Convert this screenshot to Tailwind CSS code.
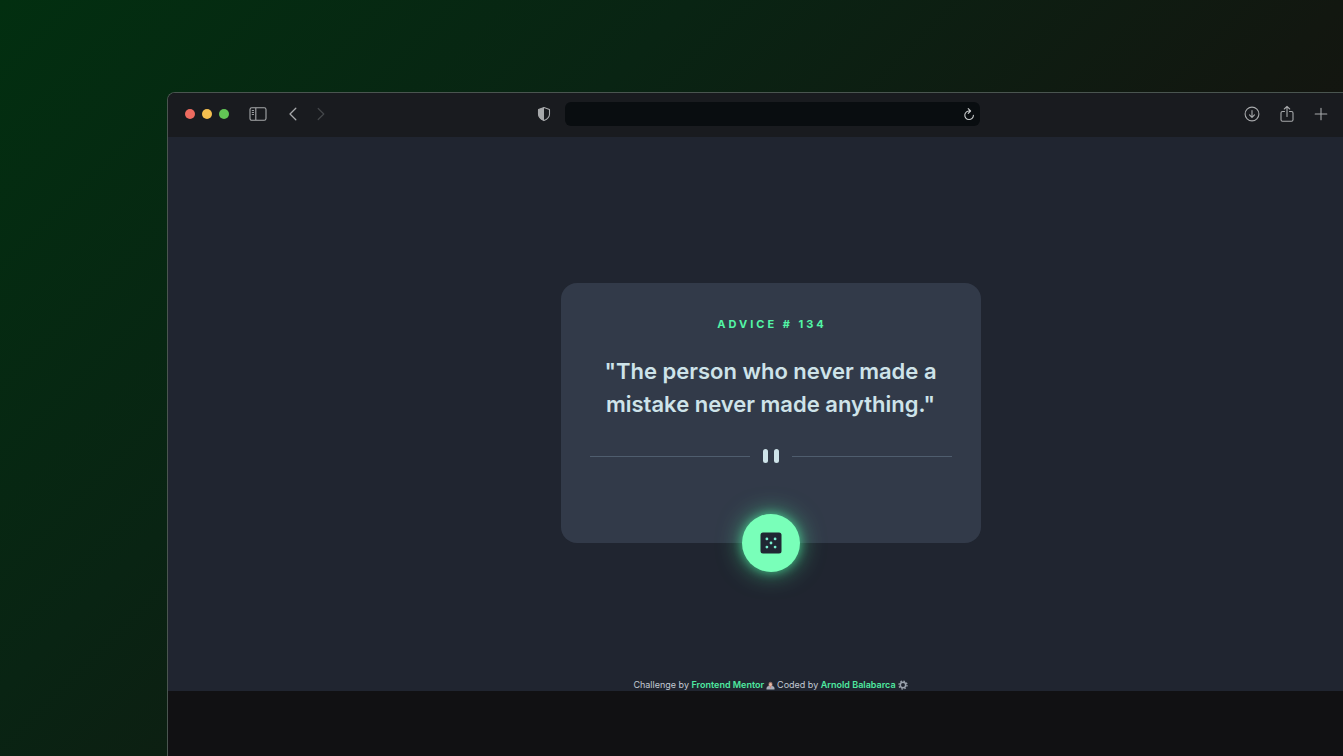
<!DOCTYPE html>
<html lang="en">
<head>
<meta charset="utf-8">
<meta name="viewport" content="width=device-width, initial-scale=1">
<title>Advice Generator</title>
<script src="https://cdn.jsdelivr.net/npm/@tailwindcss/browser@4"></script>
</head>
<body class="flex h-screen min-h-[700px] flex-col overflow-hidden bg-[linear-gradient(135deg,#022f10_0%,#092413_33%,#121710_64%,#1b0c0f_100%)] font-[Inter,sans-serif]">
  <div class="mt-[92px] -mr-[30px] ml-[167px] flex flex-1 flex-col overflow-hidden rounded-tl-lg border-t border-l border-[#4a5550] bg-[#111113]">
    <header class="flex h-11 shrink-0 items-center bg-[#191b1f] pb-[2px] text-[#a7a9ab]">
      <div class="flex flex-1 items-center pl-[17px]">
        <div class="flex gap-[7px]">
          <button aria-label="Close" class="size-[10px] rounded-full bg-[#ed6b60]"></button>
          <button aria-label="Minimize" class="size-[10px] rounded-full bg-[#f5bf4f]"></button>
          <button aria-label="Zoom" class="size-[10px] rounded-full bg-[#62c555]"></button>
        </div>
        <button aria-label="Sidebar" class="ml-5">
          <svg class="h-[14px] w-[18px]" viewBox="0 0 18 14" fill="none" stroke="currentColor"><rect x="1" y=".7" width="16" height="12.6" rx="1.8" stroke-width="1.1"/><path d="M6.8 1v12" stroke-width="1.1"/><path d="M2.8 3.5h2.2M2.8 5.5h2.2M2.8 7.5h2.2" stroke-width=".9"/></svg>
        </button>
        <button aria-label="Back" class="ml-[22px]">
          <svg class="h-[14px] w-2" viewBox="0 0 8 14" fill="none" stroke="currentColor" stroke-width="1.3" stroke-linecap="round" stroke-linejoin="round"><path d="M6.8 1.2 1 7l5.8 5.8"/></svg>
        </button>
        <button aria-label="Forward" class="ml-5 text-[#44474a]">
          <svg class="h-[14px] w-2" viewBox="0 0 8 14" fill="none" stroke="currentColor" stroke-width="1.2" stroke-linecap="round" stroke-linejoin="round"><path d="M1.2 1.5 6.8 7l-5.600 5.500"/></svg>
        </button>
      </div>
      <div class="flex items-center gap-[14px] pl-1">
        <button aria-label="Privacy report">
          <svg class="h-4 w-[14px]" viewBox="0 0 14 16"><path d="M7 1.500 12.500 3.400v5c0 2.900-2.700 4.800-5.500 6.200C4.200 13.200 1.500 11.300 1.500 8.400v-5z" fill="none" stroke="currentColor" stroke-width="1.1" stroke-linejoin="round"/><path d="M7 1.500 1.500 3.400v5c0 2.900 2.700 4.800 5.500 6.200z" fill="currentColor"/></svg>
        </button>
        <div class="flex h-6 w-[415px] items-center rounded-md bg-[#090d10] pr-1">
          <input type="text" aria-label="Address" class="h-full min-w-0 flex-1 rounded-md bg-transparent px-3 text-xs outline-none">
          <button aria-label="Reload" class="text-[#c9cbcc]">
            <svg class="size-[14px]" viewBox="0 0 14 14" fill="none" stroke="currentColor" stroke-width="1.1" stroke-linecap="round" stroke-linejoin="round"><path d="M7.800 4A4.300 4.300 0 1 0 11.400 8.200M6.200 1.700 8.600 4 6.200 6.300"/></svg>
          </button>
        </div>
      </div>
      <div class="flex flex-1 items-center justify-end gap-5 pr-[45px]">
        <button aria-label="Downloads">
          <svg class="size-4" viewBox="0 0 16 16" fill="none" stroke="currentColor" stroke-width="1.1" stroke-linecap="round" stroke-linejoin="round"><circle cx="8" cy="8" r="6.900"/><path d="M8 4.500v6.700M5.500 8.800 8 11.300l2.500-2.500"/></svg>
        </button>
        <button aria-label="Share">
          <svg class="h-[18px] w-[14px]" viewBox="0 0 14 18" fill="none" stroke="currentColor" stroke-width="1.1" stroke-linecap="round" stroke-linejoin="round"><path d="M4.500 6.500H2.500Q1 6.500 1 8v6.700q0 1.500 1.500 1.500h9q1.500 0 1.500-1.500V8q0-1.500-1.500-1.500H9.500M7 11.500V1.500M4.300 4 7 1.300 9.700 4"/></svg>
        </button>
        <button aria-label="New tab">
          <svg class="size-[14px]" viewBox="0 0 14 14" fill="none" stroke="currentColor" stroke-width="1.1" stroke-linecap="round"><path d="M7 1.200v11.600M1.200 7h11.600"/></svg>
        </button>
      </div>
    </header>

    <div class="flex flex-1 flex-col items-center bg-[#202530] pt-[146px]">
      <main class="flex w-[420px] flex-col items-center rounded-2xl bg-[#323a49] px-[29px] pt-[34px] text-center">
        <h1 class="pl-[3px] text-[11px] leading-[14px] font-bold tracking-[3px] text-[#53f5a6]">ADVICE # 134</h1>
        <p class="mt-6 text-[22px] leading-[33px] font-semibold whitespace-nowrap text-[#cee3e9]">"The person who never made a<br>mistake never made anything."</p>
        <div class="mt-7 flex w-full items-center gap-[13px]">
          <div class="h-px flex-1 bg-[#4f5d6e]"></div>
          <div class="flex gap-[6px]">
            <div class="h-[14px] w-[5px] rounded-full bg-[#cee3e9]"></div>
            <div class="h-[14px] w-[5px] rounded-full bg-[#cee3e9]"></div>
          </div>
          <div class="h-px flex-1 bg-[#4f5d6e]"></div>
        </div>
        <button aria-label="New advice" class="mt-[51px] -mb-[29px] flex size-[58px] items-center justify-center rounded-full bg-[#79ffb9] shadow-[0_0_24px_#53ffaa99,0_0_10px_#53ffaa80]">
          <svg class="size-[22px]" viewBox="0 0 22 22"><rect x=".5" y=".5" width="21" height="21" rx="2.500" fill="#202733"/><g fill="#79efcf"><circle cx="6.900" cy="6.900" r="1.400"/><circle cx="15.100" cy="6.900" r="1.400"/><circle cx="11" cy="11" r="1.400"/><circle cx="6.900" cy="15.100" r="1.400"/><circle cx="15.100" cy="15.100" r="1.400"/></g></svg>
        </button>
      </main>
      <footer class="mt-auto flex items-center gap-[2px] text-[9px] leading-3 whitespace-nowrap text-[#c3cad4]">
        <span>Challenge by <a href="#" class="font-semibold text-[#4fe9a0]">Frontend Mentor</a></span>
        <svg class="size-[9px]" viewBox="0 0 9 9"><path d="M.5 8.500V7Q.5 5.300 2.600 5h3.800Q8.500 5.300 8.500 7v1.500z" fill="#a8adb8"/><path d="M2.500 5V2.700a2 2 0 0 1 4 0V5z" fill="#8e6e68"/><circle cx="4.500" cy="3.600" r="1.500" fill="#e8b9a2"/><path d="M3.700 5.300h1.600L4.500 7.500z" fill="#d9796e"/></svg>
        <span>Coded by <a href="#" class="font-semibold text-[#4fe9a0]">Arnold Balabarca</a></span>
        <svg class="size-[10px]" viewBox="0 0 10 10" fill="none" stroke="#9ba2ad"><circle cx="5" cy="5" r="2.700" stroke-width="1.500"/><circle cx="5" cy="5" r="4" stroke-width="1.300" stroke-dasharray="1.570 1.570"/></svg>
      </footer>
    </div>
    <div class="h-[65px] shrink-0 bg-[#111113]"></div>
  </div>
</body>
</html>
